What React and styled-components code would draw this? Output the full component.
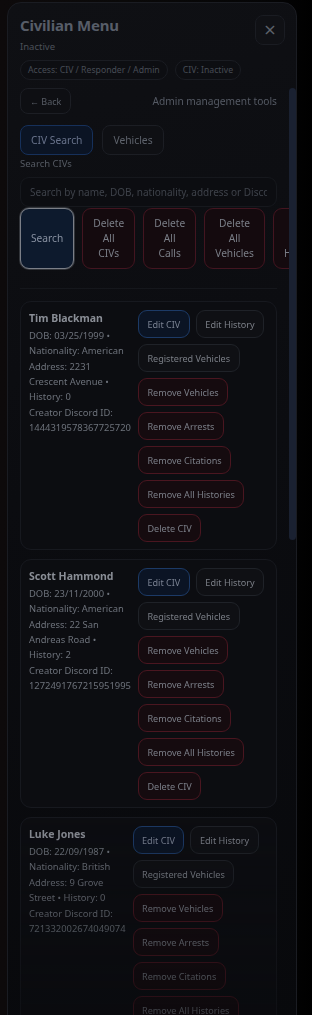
import React from "react";
import styled, { createGlobalStyle } from "styled-components";

const GlobalStyle = createGlobalStyle`
  html, body { margin: 0; padding: 0; background: #000; }
  body { font-family: "Noto Sans", "Open Sans", sans-serif; overflow: hidden; }
  * { box-sizing: border-box; }
`;

const Backdrop = styled.div`
  height: 100vh;
  overflow: hidden;
  padding: 2px 0 0 7px;
  background: linear-gradient(90deg, #0d0a0b 0%, #0a0909 40%, #050506 85%, #000 100%);
`;

const Panel = styled.div`
  width: 290px;
  height: calc(100vh + 20px);
  border: 1px solid #1a1c22;
  border-radius: 14px;
  background: linear-gradient(165deg, #0f1014 0%, #0b0c10 45%, #08090c 100%);
  display: flex;
  flex-direction: column;
  overflow: hidden;
`;

const Header = styled.div`
  flex: 0 0 auto;
  padding: 12px 11px 0 12px;
  display: flex;
  flex-direction: column;
`;

const TitleRow = styled.div`
  display: flex;
  justify-content: space-between;
  align-items: flex-start;
`;

const Title = styled.h1`
  margin: 0;
  font-size: 15px;
  line-height: 20px;
  font-weight: 700;
  color: #575d68;
  letter-spacing: -0.2px;
`;

const Status = styled.div`
  font-size: 9.5px;
  line-height: 14px;
  color: #4b5059;
  margin-top: 5px;
`;

const CloseButton = styled.button`
  width: 30px;
  height: 30px;
  border-radius: 8px;
  border: 1px solid #1a1c22;
  background: #101115;
  color: #5d626b;
  font-size: 16px;
  line-height: 1;
  padding: 0;
  display: flex;
  align-items: center;
  justify-content: center;
  font-family: "DejaVu Sans", sans-serif;
`;

const ChipRow = styled.div`
  display: flex;
  gap: 7px;
  margin-top: 6px;
`;

const Chip = styled.span`
  height: 20px;
  padding: 0 7px;
  border-radius: 10px;
  border: 1px solid #1a1c22;
  background: #0d0e12;
  color: #474c55;
  font-size: 8.7px;
  display: inline-flex;
  align-items: center;
`;

const BodyWrap = styled.div`
  flex: 1 1 auto;
  min-height: 0;
  margin-top: 8px;
  display: flex;
  -webkit-mask-image: linear-gradient(to bottom, #000 0%, #000 76%, rgba(0,0,0,0.42) 100%);
  mask-image: linear-gradient(to bottom, #000 0%, #000 76%, rgba(0,0,0,0.42) 100%);
`;

const ScrollContent = styled.div`
  flex: 1 1 auto;
  min-width: 0;
  overflow: hidden;
  padding: 0 12px 12px 12px;
`;

const ScrollTrack = styled.div`
  flex: 0 0 7px;
  width: 7px;
`;

const ScrollThumb = styled.div`
  height: 452px;
  border-radius: 4px;
  background: #1a2131;
`;

const TopRow = styled.div`
  display: flex;
  align-items: center;
  justify-content: space-between;
`;

const BackButton = styled.button`
  height: 26px;
  padding: 0 9px;
  border-radius: 8px;
  border: 1px solid #1c1e24;
  background: #0e0f13;
  color: #585d66;
  font-family: inherit;
  font-size: 9px;
`;

const Subtitle = styled.span`
  font-size: 10.2px;
  color: #555a64;
`;

const Tabs = styled.div`
  display: flex;
  gap: 9px;
  margin-top: 11px;
`;

const Tab = styled.button`
  height: 30px;
  padding: 0 10px;
  border-radius: 8px;
  font-family: inherit;
  font-size: 10.3px;
  border: 1px solid ${(p) => (p.$active ? "#16305a" : "#1c1e24")};
  background: ${(p) => (p.$active ? "#0b1424" : "#0f1014")};
  color: ${(p) => (p.$active ? "#68728a" : "#5e636c")};
`;

const Label = styled.div`
  font-size: 9.5px;
  line-height: 14px;
  color: #555a63;
  margin-top: 2px;
`;

const SearchInput = styled.input`
  display: block;
  width: 100%;
  height: 30px;
  margin-top: 6px;
  border-radius: 9px;
  border: 1px solid #16181d;
  background: #0c0d11;
  padding: 0 9px;
  font-family: inherit;
  font-size: 10px;
  color: #5a5f68;
  outline: none;
  &::placeholder { color: #3e424a; }
`;

const ActionRow = styled.div`
  display: flex;
  gap: 8px;
  margin-top: 1px;
`;

const BlockButton = styled.button`
  flex: 0 1 auto;
  padding: 7px 10px;
  border-radius: 9px;
  font-family: inherit;
  font-size: 10.2px;
  line-height: 15px;
  text-align: center;
  border: 1px solid ${(p) => (p.$variant === "primary" ? "#7b7f87" : "#431520")};
  background: ${(p) => (p.$variant === "primary" ? "#0d1a2d" : "#140a0e")};
  color: ${(p) => (p.$variant === "primary" ? "#8790a0" : "#7a7e87")};
  box-shadow: ${(p) => (p.$variant === "primary" ? "0 0 0 1px rgba(120,125,135,0.35)" : "none")};
`;

const Divider = styled.hr`
  border: none;
  border-top: 1px solid #15171c;
  margin: 19px 0 12px;
`;

const CardList = styled.div`
  display: flex;
  flex-direction: column;
  gap: 9px;
`;

const Card = styled.div`
  border: 1px solid #17191f;
  border-radius: 11px;
  background: #0c0d11;
  padding: 8px 8px 7px 8px;
  display: flex;
  gap: 7px;
  align-items: flex-start;
`;

const Info = styled.div`
  flex: 1 1 auto;
  padding-top: 1px;
`;

const Name = styled.div`
  font-size: 10.5px;
  line-height: 15px;
  font-weight: 700;
  color: #8a8e96;
  margin-bottom: 2px;
`;

const Detail = styled.div`
  font-size: 9.4px;
  line-height: 15px;
  color: #6d727b;
  margin-bottom: 1px;
`;

const Actions = styled.div`
  flex: 1 1 auto;
  display: flex;
  flex-wrap: wrap;
  gap: 6px;
  align-content: flex-start;
`;

const variants = {
  primary: { bg: "#0b1424", border: "#1c3a66", color: "#7a8292" },
  neutral: { bg: "#0f1014", border: "#1f2228", color: "#7b7f87" },
  danger: { bg: "#150b0f", border: "#4a1620", color: "#7b7f88" },
};

const ActionButton = styled.button`
  height: 28px;
  padding: 0 8.5px;
  border-radius: 9px;
  font-family: inherit;
  font-size: 9.1px;
  white-space: nowrap;
  border: 1px solid ${(p) => variants[p.$variant].border};
  background: ${(p) => variants[p.$variant].bg};
  color: ${(p) => variants[p.$variant].color};
`;

const civs = [
  { name: "Tim Blackman", dob: "03/25/1999", nat: "American", addr: "2231 Crescent Avenue", hist: 0, id: "1444319578367725720" },
  { name: "Scott Hammond", dob: "23/11/2000", nat: "American", addr: "22 San Andreas Road", hist: 2, id: "1272491767215951995" },
  { name: "Luke Jones", dob: "22/09/1987", nat: "British", addr: "9 Grove Street", hist: 0, id: "721332002674049074" },
];

const actions = [
  ["Edit CIV", "primary"],
  ["Edit History", "neutral"],
  ["Registered Vehicles", "neutral"],
  ["Remove Vehicles", "danger"],
  ["Remove Arrests", "danger"],
  ["Remove Citations", "danger"],
  ["Remove All Histories", "danger"],
  ["Delete CIV", "danger"],
];

function CivCard({ civ }) {
  return (
    <Card>
      <Info>
        <Name>{civ.name}</Name>
        <Detail>{`DOB: ${civ.dob} • Nationality: ${civ.nat}`}</Detail>
        <Detail>{`Address: ${civ.addr} • History: ${civ.hist}`}</Detail>
        <Detail>{`Creator Discord ID: ${civ.id}`}</Detail>
      </Info>
      <Actions>
        {actions.map(([label, v]) => (
          <ActionButton key={label} $variant={v}>{label}</ActionButton>
        ))}
      </Actions>
    </Card>
  );
}

export default function App() {
  return (
    <>
      <GlobalStyle />
      <Backdrop>
        <Panel>
          <Header>
            <TitleRow>
              <div>
                <Title>Civilian Menu</Title>
                <Status>Inactive</Status>
              </div>
              <CloseButton aria-label="Close">×</CloseButton>
            </TitleRow>
            <ChipRow>
              <Chip>Access: CIV / Responder / Admin</Chip>
              <Chip>CIV: Inactive</Chip>
            </ChipRow>
          </Header>
          <BodyWrap>
            <ScrollContent>
              <TopRow>
                <BackButton>← Back</BackButton>
                <Subtitle>Admin management tools</Subtitle>
              </TopRow>
              <Tabs>
                <Tab $active>CIV Search</Tab>
                <Tab>Vehicles</Tab>
              </Tabs>
              <Label>Search CIVs</Label>
              <SearchInput placeholder="Search by name, DOB, nationality, address or Discord ID" />
              <ActionRow>
                <BlockButton $variant="primary">Search</BlockButton>
                <BlockButton>Delete All CIVs</BlockButton>
                <BlockButton>Delete All Calls</BlockButton>
                <BlockButton>Delete All Vehicles</BlockButton>
                <BlockButton>Delete All Histories</BlockButton>
              </ActionRow>
              <Divider />
              <CardList>
                {civs.map((c) => (
                  <CivCard key={c.name} civ={c} />
                ))}
              </CardList>
            </ScrollContent>
            <ScrollTrack>
              <ScrollThumb />
            </ScrollTrack>
          </BodyWrap>
        </Panel>
      </Backdrop>
    </>
  );
}
